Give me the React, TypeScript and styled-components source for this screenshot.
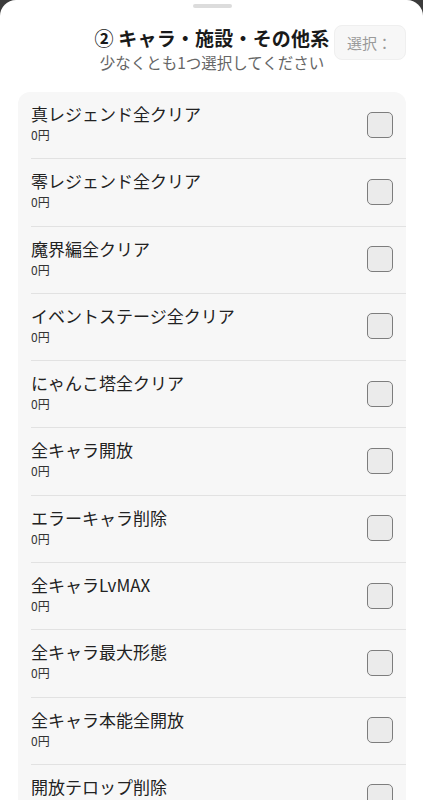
import React from 'react'
import styled, { createGlobalStyle } from 'styled-components'

const GlobalStyle = createGlobalStyle`
  html, body {
    margin: 0;
    padding: 0;
    background: #3b3b3b;
  }
  body {
    font-family: "Noto Sans CJK JP", "Noto Sans", sans-serif;
  }
`

const Sheet = styled.div`
  position: relative;
  height: 800px;
  background: #ffffff;
  border-radius: 16px 16px 0 0;
  overflow: hidden;
  box-sizing: border-box;
  padding: 4px 17px 0 18px;
`

const Handle = styled.div`
  width: 39px;
  height: 4px;
  margin: 0 auto;
  border-radius: 2px;
  background: #dcdcdc;
`

const Header = styled.div`
  position: relative;
  display: flex;
  flex-direction: column;
  align-items: center;
  padding-top: 16px;
  margin-bottom: 20px;
`

const Title = styled.h2`
  margin: 0;
  font-size: 19px;
  line-height: 28px;
  font-weight: 700;
  color: #1a1a1a;
  letter-spacing: 0.2px;
`

const Subtitle = styled.p`
  margin: 0;
  font-size: 15.5px;
  line-height: 20px;
  color: #666666;
`

const SelectButton = styled.button`
  position: absolute;
  top: 17px;
  right: 0;
  width: 72px;
  height: 35px;
  padding: 0 0 0 12px;
  text-align: left;
  white-space: nowrap;
  overflow: hidden;
  border: 1px solid #efefef;
  border-radius: 8px;
  background: #f7f7f7;
  font-family: inherit;
  font-size: 15px;
  color: #9a9a9a;
`

const Card = styled.div`
  background: #f7f7f7;
  border-radius: 12px;
`

const Row = styled.div`
  display: flex;
  align-items: center;
  justify-content: space-between;
  margin-left: 13px;
  padding: 11px 13px 13.3px 0;
  border-bottom: 1px solid #e2e2e2;
`

const Texts = styled.div`
  display: flex;
  flex-direction: column;
`

const Name = styled.span`
  font-size: 17px;
  line-height: 22px;
  color: #222222;
`

const Price = styled.span`
  font-size: 12px;
  line-height: 20px;
  color: #333333;
`

const Check = styled.span`
  width: 26px;
  height: 26px;
  box-sizing: border-box;
  border: 1.5px solid #7d7d7d;
  border-radius: 5px;
  background: #ebebeb;
  margin-top: 1px;
`

const items = [
  '真レジェンド全クリア',
  '零レジェンド全クリア',
  '魔界編全クリア',
  'イベントステージ全クリア',
  'にゃんこ塔全クリア',
  '全キャラ開放',
  'エラーキャラ削除',
  '全キャラLvMAX',
  '全キャラ最大形態',
  '全キャラ本能全開放',
  '開放テロップ削除',
]

export default function App() {
  return (
    <>
      <GlobalStyle />
      <Sheet>
        <Handle />
        <Header>
          <Title>② キャラ・施設・その他系</Title>
          <Subtitle>少なくとも1つ選択してください</Subtitle>
          <SelectButton>選択：</SelectButton>
        </Header>
        <Card>
          {items.map((name) => (
            <Row key={name}>
              <Texts>
                <Name>{name}</Name>
                <Price>0円</Price>
              </Texts>
              <Check />
            </Row>
          ))}
        </Card>
      </Sheet>
    </>
  )
}
